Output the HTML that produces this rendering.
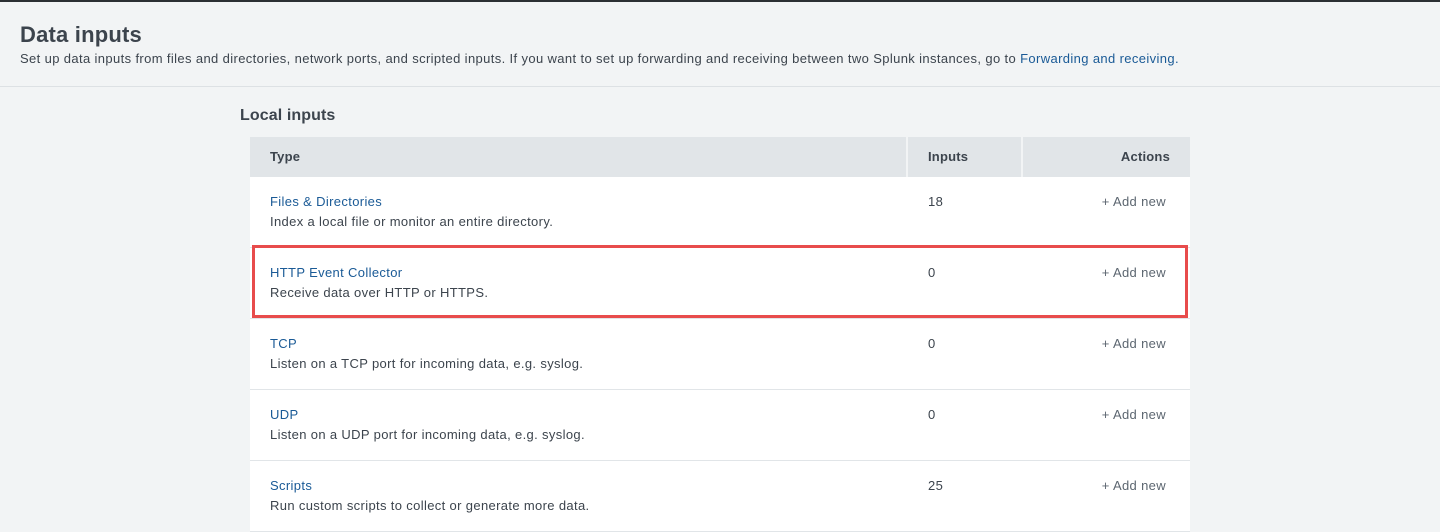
<!DOCTYPE html>
<html><head><style>
body{margin:0;width:1440px;height:532px;overflow:hidden;background:#f2f4f5;font-family:"Liberation Sans",sans-serif;color:#3c444d;position:relative}
.top{position:absolute;left:0;top:0;width:1440px;height:2px;background:#2b3033}
h1{position:absolute;left:20px;top:22px;margin:0;font-size:22px;font-weight:bold;color:#3c444d;letter-spacing:0.2px}
.sub{position:absolute;left:20px;top:51px;font-size:13px;color:#3c444d;letter-spacing:0.37px}
a{color:#1a5a96;text-decoration:none}
.sep{position:absolute;left:0;top:86px;width:1440px;height:1px;background:#dde1e4}
h2{position:absolute;left:240px;top:107px;margin:0;font-size:16px;font-weight:bold;letter-spacing:0.1px}
.tbl{position:absolute;left:250px;top:137px;width:940px}
.hd{height:40px;background:#e1e5e8;position:relative;font-size:13px;font-weight:bold;letter-spacing:0.2px}
.hd span{position:absolute;top:12px}
.vl{position:absolute;top:0;width:2px;height:40px;background:#f2f4f5}
.row{height:70px;background:#fff;border-bottom:1px solid #e1e5e8;position:relative;font-size:13px;letter-spacing:0.35px}
.row .t{position:absolute;left:20px;top:17px}
.row .d{position:absolute;left:20px;top:37px}
.row .n{position:absolute;left:678px;top:17px}
.row .a{position:absolute;right:24px;top:17px;color:#5c6670}
.red{position:absolute;left:252px;top:245px;width:930px;height:67px;border:3px solid #e84c4c}
</style></head><body>
<div class="top"></div>
<h1>Data inputs</h1>
<div class="sub">Set up data inputs from files and directories, network ports, and scripted inputs. If you want to set up forwarding and receiving between two Splunk instances, go to <a>Forwarding and receiving.</a></div>
<div class="sep"></div>
<h2>Local inputs</h2>
<div class="tbl">
<div class="hd"><span style="left:20px">Type</span><div class="vl" style="left:656px"></div><span style="left:678px">Inputs</span><div class="vl" style="left:771px"></div><span style="right:20px">Actions</span></div>
<div class="row"><a class="t">Files &amp; Directories</a><div class="d">Index a local file or monitor an entire directory.</div><div class="n">18</div><div class="a">+ Add new</div></div>
<div class="row"><a class="t">HTTP Event Collector</a><div class="d">Receive data over HTTP or HTTPS.</div><div class="n">0</div><div class="a">+ Add new</div></div>
<div class="row"><a class="t">TCP</a><div class="d">Listen on a TCP port for incoming data, e.g. syslog.</div><div class="n">0</div><div class="a">+ Add new</div></div>
<div class="row"><a class="t">UDP</a><div class="d">Listen on a UDP port for incoming data, e.g. syslog.</div><div class="n">0</div><div class="a">+ Add new</div></div>
<div class="row"><a class="t">Scripts</a><div class="d">Run custom scripts to collect or generate more data.</div><div class="n">25</div><div class="a">+ Add new</div></div>
</div>
<div class="red"></div>
</body></html>
